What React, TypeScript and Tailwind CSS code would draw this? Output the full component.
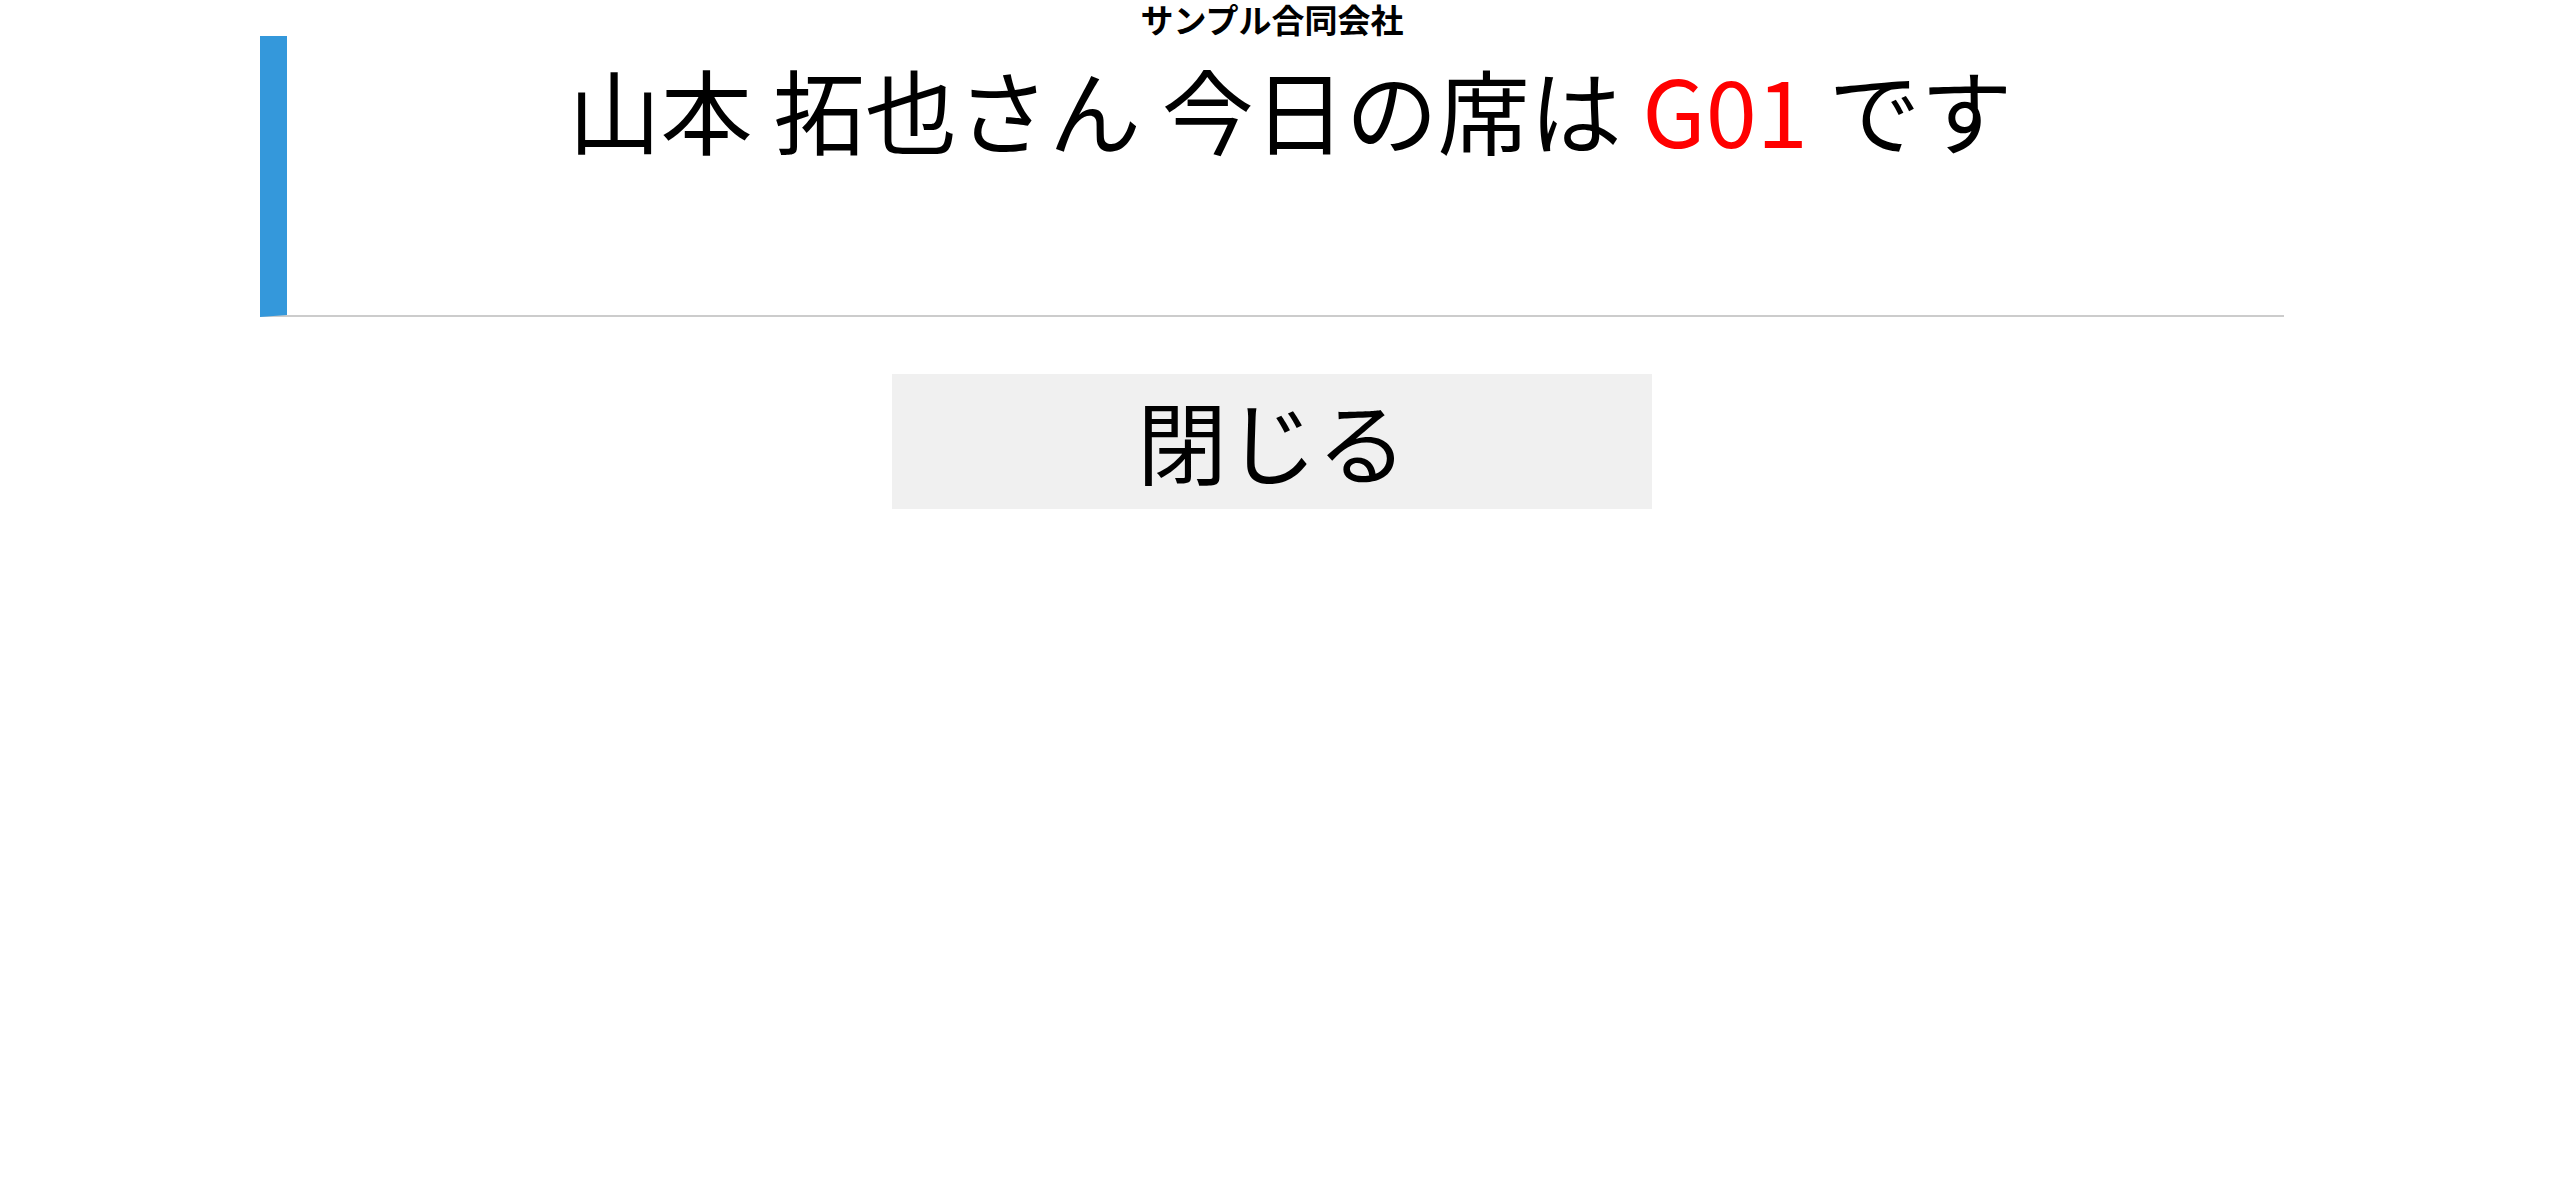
export default function App() {
  return (
    <div
      className="min-h-screen w-full bg-white text-black"
      style={{ fontFamily: '"Noto Sans CJK JP", "Noto Sans", sans-serif' }}
    >
      <div className="ml-[260px] w-[2024px]">
        <div className="h-[36px] text-center text-[33px] font-bold leading-[38px]">サンプル合同会社</div>
        <div className="h-[281px] border-l-[27px] border-b-2 border-l-[#3498db] border-b-[#cccccc] text-center">
          <h2 className="pl-[10px] pt-[8px] text-[92px] font-normal leading-[1.4]">
            山本 拓也さん 今日の席は <span className="text-[#ff0000]">G01</span> です
          </h2>
        </div>
        <div className="mt-[57px] flex justify-center">
          <button className="flex h-[135px] w-[760px] items-center justify-center bg-[#f0f0f0] pb-[6px] text-[90px] leading-none text-black">
            閉じる
          </button>
        </div>
      </div>
    </div>
  );
}
